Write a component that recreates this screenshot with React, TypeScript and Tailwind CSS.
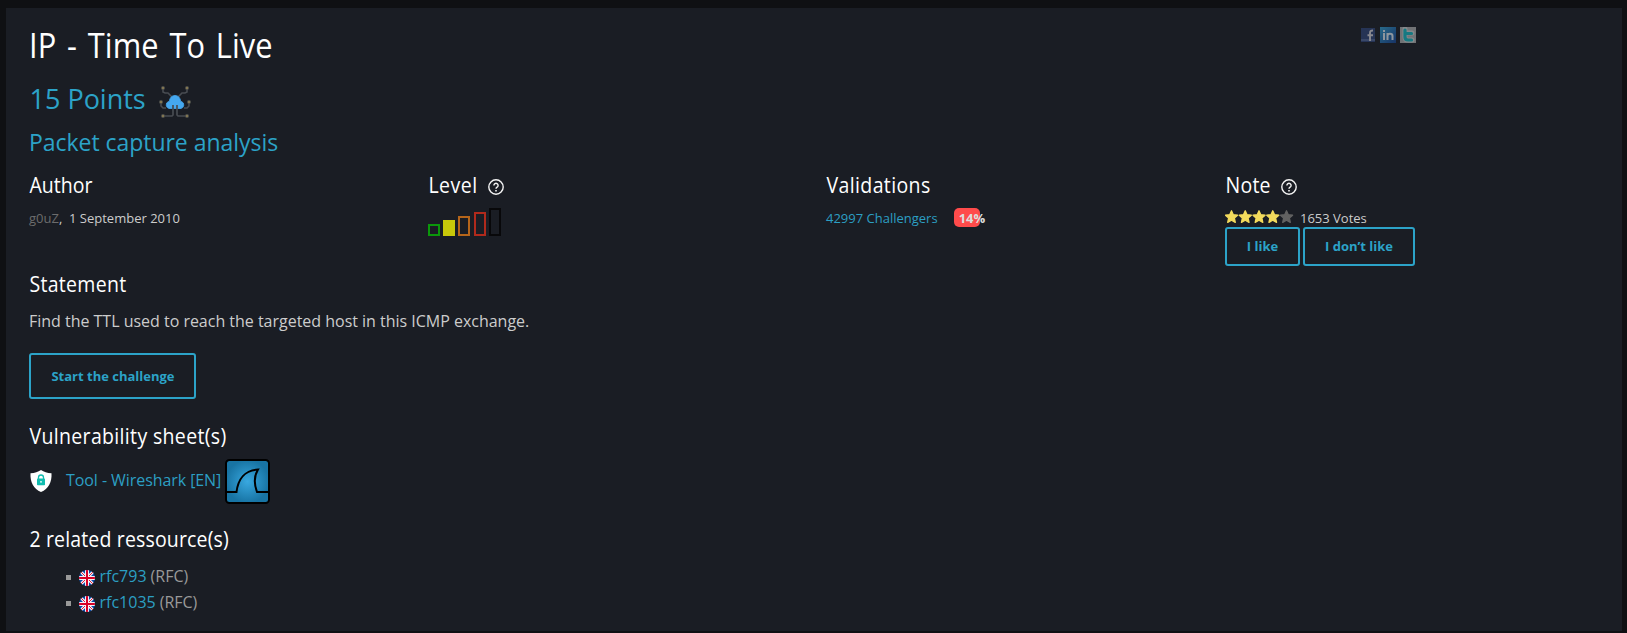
import React from 'react';

const heading = "h-8 pl-[0.5px] origin-left scale-x-93 font-['Open_Sans','Noto_Sans',sans-serif] text-[21px] leading-8 text-white whitespace-nowrap";

function Help() {
  return (
    <svg className="mt-[4px] h-4 w-4" viewBox="0 0 16 16" fill="none" stroke="#f4f4f4">
      <circle cx="8" cy="8" r="7.2" strokeWidth="1.4" />
      <path d="M5.9 6.4a2.1 2.1 0 1 1 3.2 1.8c-.8.5-1.1.7-1.1 1.6" strokeWidth="1.4" />
      <path d="M8 11v1.4" strokeWidth="1.6" />
    </svg>
  );
}

function NetworkIcon() {
  return (
    <svg className="h-8 w-8" viewBox="0 0 32 32" fill="none">
      <g stroke="#484c52" strokeWidth="1.6">
        <path d="M4 3v3l2 1h3l5 5M28 3v3l-2 1h-3l-5 5" />
        <path d="M2 16v4l2 2h3M30 16v4l-2 2h-3" />
      </g>
      <path d="M10 22.500A3.700 3.700 0 0 1 9.500 15.500h.8C10.800 11.500 13 9.500 16 9.500s5.200 2 5.700 6h.8a3.700 3.700 0 0 1-.5 7z" fill="#45a8f0" stroke="#45a8f0" strokeWidth=".8" />
      <path d="M14 19v10l-1 1H4M18 19v10l1 1h9" stroke="#484c52" strokeWidth="1.700" />
      <g fill="#827551" stroke="#44474b" strokeWidth=".7">
        <circle cx="4" cy="2" r="1.700" /><circle cx="28" cy="2" r="1.700" />
        <circle cx="2" cy="16" r="1.700" /><circle cx="30" cy="16" r="1.700" />
        <circle cx="4" cy="30" r="1.700" /><circle cx="28" cy="30" r="1.700" />
      </g>
    </svg>
  );
}

function Social() {
  return (
    <div className="mt-[7px] flex h-4 items-center">
      <svg className="h-[14px] w-[14px]" viewBox="0 0 14 14">
        <path fill="#263455" d="M0 0h14v14H0z" />
        <path fill="#3a4869" d="M0 11h14v2H0z" />
        <path d="M9 13V5c0-1.800.8-2.500 3-2.500M6.500 7.300h5.500" stroke="#898990" strokeWidth="1.900" fill="none" />
      </svg>
      <svg className="ml-[5px] h-4 w-4" viewBox="0 0 16 16">
        <defs>
          <linearGradient id="li" x2="1" y2="1"><stop stopColor="#286b8b" /><stop offset="1" stopColor="#173365" /></linearGradient>
        </defs>
        <path fill="url(#li)" d="M0 0h16v16H0z" />
        <path d="M4 6v7M4 3v2M7.500 13V6M7.500 9c0-3 5-3 5 0v4" stroke="#8d969e" strokeWidth="2" fill="none" />
      </svg>
      <svg className="ml-1 h-4 w-4" viewBox="0 0 16 16">
        <path fill="#717376" d="M0 0h16v16H0z" />
        <path d="M5 2v8q0 3 3 3h4M5 6h7" stroke="#85898c" strokeWidth="5" fill="none" strokeLinecap="round" />
        <path d="M5 3v7q0 3 3 3h3.500M5 6.500h6.500" stroke="#167982" strokeWidth="3.200" fill="none" strokeLinecap="round" />
      </svg>
    </div>
  );
}

function Stars() {
  return (
    <svg className="h-[14px] w-[69px]" viewBox="0 0 69 14">
      {[0, 1, 2, 3, 4].map((i) => (
        <path
          key={i}
          transform={`translate(${i * 13.75} 0)`}
          fill={i < 4 ? '#f3db5c' : '#626262'}
          stroke={i < 4 ? '#f3db5c' : '#626262'}
          strokeWidth="1.300"
          strokeLinejoin="round"
          d="M6.500.8l1.800 3.900 4.300.5-3.200 2.900.9 4.300-3.800-2.100-3.800 2.100.9-4.300L.5 5.200l4.200-.5z"
        />
      ))}
    </svg>
  );
}

function Level() {
  return (
    <svg className="h-7 w-[73px]" viewBox="0 0 73 28" fill="none" strokeWidth="2">
      <path d="M1 17h10v10H1z" stroke="#0b970b" />
      <path d="M15 12h12v16H15z" fill="#c8c80a" />
      <path d="M31 9h10v18H31z" stroke="#b5651a" />
      <path d="M47 5h10v22H47z" stroke="#b02a1c" />
      <path d="M62 1h10v26H62z" stroke="#08080a" />
    </svg>
  );
}

function Shield() {
  return (
    <svg className="mb-[2px] h-[22px] w-[22px]" viewBox="0 0 22 22">
      <path d="M11 0c3 2 6 3 10.500 3.200C22 12 18.500 19 11 22 3.500 19 0 12 .5 3.200 5 3 8 2 11 0z" fill="#fff" />
      <rect x="7" y="8.500" width="8" height="6.800" rx=".8" fill="#12bdb0" />
      <path d="M8.500 9V7.500a2.500 2.500 0 0 1 5 0V9" fill="none" stroke="#12bdb0" strokeWidth="1.300" />
      <circle cx="11" cy="11.800" r=".9" fill="#fff" />
    </svg>
  );
}

function Wireshark() {
  return (
    <svg className="h-[45px] w-[45px]" viewBox="0 0 45 45">
      <defs>
        <radialGradient id="ws"><stop stopColor="#38a8e0" /><stop offset="1" stopColor="#1874a4" /></radialGradient>
      </defs>
      <rect x="1" y="1" width="43" height="43" rx="3.500" fill="url(#ws)" stroke="#000" strokeWidth="2" />
      <path d="M2 33h9.500C13 20 20 11 33 10.500 29 17 29 25 32 33h11" fill="none" stroke="#000" strokeWidth="2" />
    </svg>
  );
}

function Flag() {
  return (
    <svg className="mt-[3px] h-4 w-4" viewBox="0 0 16 16">
      <clipPath id="disc"><circle cx="8" cy="8" r="8" /></clipPath>
      <g clipPath="url(#disc)">
        <path fill="#0a4ba8" d="M0 0h16v16H0z" />
        <path d="M0 0l16 16M16 0L0 16" stroke="#f4f4f8" strokeWidth="3" />
        <path d="M0 0l16 16M16 0L0 16" stroke="#d80027" strokeWidth=".9" />
        <path d="M8 0v16M0 8h16" stroke="#f4f4f8" strokeWidth="4" />
        <path d="M8 0v16M0 8h16" stroke="#d80027" strokeWidth="2" />
      </g>
    </svg>
  );
}

function Resource({ name }: { name: string }) {
  return (
    <li className="flex h-[26px] items-center whitespace-nowrap text-base leading-[26px] text-[#999]">
      <span className="mr-2 mt-[2px] h-[5px] w-[5px] bg-[#999]" />
      <Flag />
      <a className="ml-[4.5px] mr-1 text-[#2c9fc3]">{name}</a>
      <span>(RFC)</span>
    </li>
  );
}

const button = 'rounded-[3px] border-2 border-[#2ca3c8] text-[13px] font-bold text-[#2ca3c8] whitespace-nowrap';

export default function App() {
  return (
    <div className="h-[633px] overflow-hidden bg-[#0f1013] pl-[6px] pt-2 font-['Open_Sans','Noto_Sans',sans-serif] text-[#ccc]">
      <main className="h-[623px] w-[1616px] bg-[#1a1d24] pl-[23px] pt-3">
        <div className="flex h-12 w-[1387px] justify-between">
          <h1 className="mt-px h-12 origin-left scale-x-88 whitespace-nowrap text-[35px] leading-[48px] tracking-[0.1px] [word-spacing:3px] text-white">IP - Time To Live</h1>
          <Social />
        </div>
        <div className="mt-[10px] flex h-10 items-center">
          <h2 className="w-[130px] whitespace-nowrap pt-[2px] pl-[0.5px] text-[27px] leading-10 text-[#2ca3c8]">15 Points</h2>
          <div className="pt-2"><NetworkIcon /></div>
        </div>
        <h3 className="mt-[6px] h-9 whitespace-nowrap text-[23px] leading-9 tracking-[-0.04px] text-[#2ca3c8]">Packet capture analysis</h3>

        <div className="mt-[9px] grid h-[99px] w-[1594px] grid-cols-4 items-start text-[13px] leading-5">
          <section>
            <h4 className={heading}>Author</h4>
            <p className="mt-[7px] whitespace-pre"><span className="text-[#6c6c6c]">g0uZ</span>,  1 September 2010</p>
          </section>
          <section>
            <div className="flex items-center"><h4 className={`${heading} w-[60px] tracking-[0.5px]`}>Level</h4><Help /></div>
            <div className="mt-[7px]"><Level /></div>
          </section>
          <section>
            <h4 className={`${heading} tracking-[0.4px]`}>Validations</h4>
            <div className="mt-[7px] flex items-center">
              <a className="whitespace-nowrap text-[#2c9fc3]">42997 Challengers</a>
              <div className="ml-4 mt-[-1px] h-[19px] w-[26px] whitespace-nowrap rounded-[5px] bg-[#ff4b4b] pl-[5px] leading-[21px] font-bold text-[#ddd]">14%</div>
            </div>
          </section>
          <section>
            <div className="flex items-center"><h4 className={`${heading} w-[56px] tracking-[0.25px]`}>Note</h4><Help /></div>
            <div className="mt-[7px] flex h-[19px] items-start gap-[6.5px]"><div className="pt-[2px]"><Stars /></div><span className="whitespace-nowrap">1653 Votes</span></div>
            <div className="flex gap-[3px]">
              <button className={`${button} h-[39px] w-[75px] pb-[2px] pl-px`}>I like</button>
              <button className={`${button} h-[39px] w-[112px] pb-[2px] pl-px`}>I don’t like</button>
            </div>
          </section>
        </div>

        <h4 className={`${heading} tracking-[0.3px]`}>Statement</h4>
        <p className="mt-[9px] whitespace-nowrap text-base leading-6 tracking-[-0.015px]">Find the TTL used to reach the targeted host in this ICMP exchange.</p>
        <button className={`${button} mt-5 block h-[46px] w-[167px] pt-px pl-px`}>Start the challenge</button>

        <h4 className={`${heading} mt-[21px] tracking-[0.35px]`}>Vulnerability sheet(s)</h4>
        <div className="mt-[7px] flex h-[45px] items-center pl-[1px]">
          <Shield />
          <a className="mb-[3px] ml-[14px] w-[159px] whitespace-nowrap text-base leading-6 tracking-[-0.07px] text-[#2c9fc3]">Tool - Wireshark [EN]</a>
          <Wireshark />
        </div>

        <h4 className={`${heading} mt-[19px] tracking-[0.15px]`}>2 related ressource(s)</h4>
        <ul className="mt-2 pl-[37px]">
          <Resource name="rfc793" />
          <Resource name="rfc1035" />
        </ul>
      </main>
    </div>
  );
}
